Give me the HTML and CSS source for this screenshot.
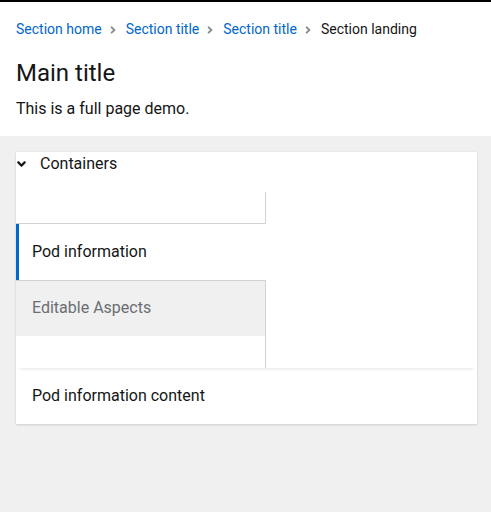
FILE: index.html
```html
<!DOCTYPE html>
<html lang="en">
<head>
<meta charset="utf-8">
<title>Full page demo</title>
<link rel="stylesheet" href="styles.css">
</head>
<body>
<div class="page">
  <div class="topbar"></div>
  <section class="header">
    <nav class="breadcrumb" aria-label="Breadcrumb">
      <ol class="crumbs">
        <li class="crumb"><a class="crumb-link" href="#">Section home</a></li>
        <li class="crumb"><svg class="divider" viewBox="0 0 256 512" aria-hidden="true"><path d="M224.3 273l-136 136c-9.4 9.4-24.6 9.4-33.9 0l-22.6-22.6c-9.4-9.4-9.4-24.6 0-33.9l96.4-96.4-96.4-96.4c-9.4-9.4-9.4-24.6 0-33.9L54.3 103c9.4-9.4 24.6-9.4 33.9 0l136 136c9.5 9.4 9.5 24.6.1 34z"/></svg><a class="crumb-link" href="#">Section title</a></li>
        <li class="crumb"><svg class="divider" viewBox="0 0 256 512" aria-hidden="true"><path d="M224.3 273l-136 136c-9.4 9.4-24.6 9.4-33.9 0l-22.6-22.6c-9.4-9.4-9.4-24.6 0-33.9l96.4-96.4-96.4-96.4c-9.4-9.4-9.4-24.6 0-33.9L54.3 103c9.4-9.4 24.6-9.4 33.9 0l136 136c9.5 9.4 9.5 24.6.1 34z"/></svg><a class="crumb-link" href="#">Section title</a></li>
        <li class="crumb"><svg class="divider" viewBox="0 0 256 512" aria-hidden="true"><path d="M224.3 273l-136 136c-9.4 9.4-24.6 9.4-33.9 0l-22.6-22.6c-9.4-9.4-9.4-24.6 0-33.9l96.4-96.4-96.4-96.4c-9.4-9.4-9.4-24.6 0-33.9L54.3 103c9.4-9.4 24.6-9.4 33.9 0l136 136c9.5 9.4 9.5 24.6.1 34z"/></svg><span class="crumb-current">Section landing</span></li>
      </ol>
    </nav>
    <h1 class="title">Main title</h1>
    <p class="lead">This is a full page demo.</p>
  </section>
  <section class="main">
    <div class="card">
      <button class="toggle" type="button">
        <svg class="toggle-icon" viewBox="0 0 320 512" aria-hidden="true"><path d="M143 352.3L7 216.3c-9.4-9.4-9.4-24.6 0-33.9l22.6-22.6c9.4-9.4 24.6-9.4 33.9 0l96.4 96.4 96.4-96.4c9.4-9.4 24.6-9.4 33.9 0l22.6 22.6c9.4 9.4 9.4 24.6 0 33.9l-136 136c-9.2 9.4-24.4 9.4-33.8 0z"/></svg>
        <span class="toggle-text">Containers</span>
      </button>
      <div class="tabs">
        <div class="tablist">
          <div class="tab-spacer tab-spacer-top"></div>
          <div class="tab tab-current">Pod information</div>
          <div class="tab tab-disabled">Editable Aspects</div>
          <div class="tab-spacer tab-spacer-bottom"></div>
        </div>
      </div>
      <div class="panel">Pod information content</div>
    </div>
  </section>
</div>
</body>
</html>
```
FILE: styles.css
```css
* {
  box-sizing: border-box;
}

html, body {
  margin: 0;
  padding: 0;
}

body {
  font-family: Roboto, "Liberation Sans", sans-serif;
  font-size: 16px;
  line-height: 24px;
  color: #151515;
  background: #ffffff;
}

.page {
  min-height: 100vh;
  display: flex;
  flex-direction: column;
}

.topbar {
  height: 2px;
  background: #000000;
}

.header {
  padding: 17px 16px 15px;
  background: #ffffff;
}

.crumbs {
  list-style: none;
  margin: 0;
  padding: 0;
  display: flex;
  align-items: center;
  font-size: 14px;
  line-height: 21px;
}

.crumb {
  display: flex;
  align-items: center;
}

.crumb-link {
  color: #0066cc;
  text-decoration: none;
}

.crumb-current {
  color: #151515;
}

.divider {
  width: 6px;
  height: 12px;
  margin: 0 10px 0 8px;
  fill: #8a8d90;
}

.title {
  margin: 18px 0 0;
  font-size: 24px;
  line-height: 30px;
  font-weight: 400;
}

.lead {
  margin: 9px 0 0;
}

.main {
  flex: 1;
  background: #f0f0f0;
  padding: 16px 14px 16px 16px;
}

.card {
  background: #ffffff;
  box-shadow: 0 1px 2px 0 rgba(3, 3, 3, 0.12), 0 0 2px 0 rgba(3, 3, 3, 0.06);
}

.toggle {
  display: flex;
  align-items: center;
  height: 24px;
  margin: 0 0 16px;
  padding: 0;
  border: 0;
  background: transparent;
  font: inherit;
  color: #151515;
  cursor: pointer;
}

.toggle-icon {
  width: 9px;
  height: 14px;
  margin: 0 14px 0 1px;
  fill: #151515;
}

.tabs {
  box-shadow: 0 4px 4px -4px rgba(3, 3, 3, 0.18);
}

.tablist {
  width: 250px;
  display: flex;
  flex-direction: column;
}

.tab-spacer {
  height: 32px;
  border-right: 1px solid #d2d2d2;
}

.tab-spacer-top {
  border-bottom: 1px solid #d2d2d2;
}

.tab {
  height: 56px;
  padding: 16px;
}

.tab-current {
  border-left: 3px solid #0066cc;
  padding-left: 13px;
}

.tab-disabled {
  padding-top: 15px;
  border-top: 1px solid #d2d2d2;
  border-right: 1px solid #d2d2d2;
  background: #f0f0f0;
  color: #6a6e73;
}

.panel {
  padding: 16px;
}
```
